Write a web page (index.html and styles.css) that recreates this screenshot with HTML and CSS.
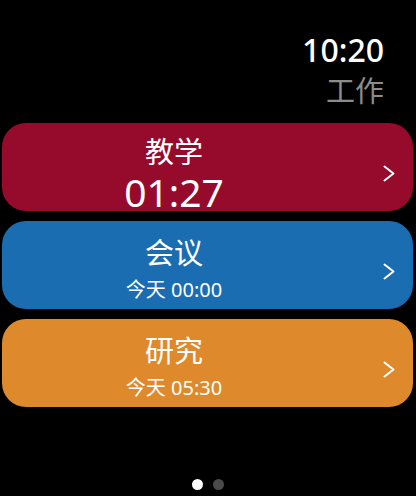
FILE: index.html
```html
<!DOCTYPE html>
<html lang="zh">
<head>
<meta charset="utf-8">
<title>工作</title>
<link rel="stylesheet" href="styles.css">
</head>
<body>
<div class="screen">
  <header class="status">
    <div class="clock">10:20</div>
    <div class="page-title">工作</div>
  </header>

  <main class="list">
    <a class="card card-teach" href="#">
      <div class="card-body card-body-timer">
        <div class="card-title">教学</div>
        <div class="card-timer">01:27</div>
      </div>
      <svg class="chevron" viewBox="0 0 12 17" aria-hidden="true"><polyline points="1.5,1.5 10.5,8.5 1.5,15.5"/></svg>
    </a>
    <a class="card card-meet" href="#">
      <div class="card-body">
        <div class="card-title">会议</div>
        <div class="card-sub">今天 00:00</div>
      </div>
      <svg class="chevron" viewBox="0 0 12 17" aria-hidden="true"><polyline points="1.5,1.5 10.5,8.5 1.5,15.5"/></svg>
    </a>
    <a class="card card-study" href="#">
      <div class="card-body">
        <div class="card-title">研究</div>
        <div class="card-sub">今天 05:30</div>
      </div>
      <svg class="chevron" viewBox="0 0 12 17" aria-hidden="true"><polyline points="1.5,1.5 10.5,8.5 1.5,15.5"/></svg>
    </a>
  </main>

  <nav class="pager">
    <span class="dot dot-active"></span>
    <span class="dot"></span>
  </nav>
</div>
</body>
</html>
```

FILE: styles.css
```css
html, body {
  margin: 0;
  padding: 0;
  background: #000;
}

body {
  font-family: "Noto Sans", "Noto Sans CJK SC", sans-serif;
  color: #fff;
}

.screen {
  width: 416px;
  height: 496px;
  display: flex;
  flex-direction: column;
  overflow: hidden;
}

/* Top-right status: clock and screen title */
.status {
  display: flex;
  flex-direction: column;
  align-items: flex-end;
  padding: 32px 32px 0 0;
}

.clock {
  font-size: 32px;
  line-height: 36px;
  font-weight: 500;
}

.page-title {
  font-family: "Noto Sans CJK SC", sans-serif;
  font-size: 29px;
  line-height: 36px;
  color: #8c8c8c;
  margin-top: 3px;
}

/* Category cards */
.list {
  display: flex;
  flex-direction: column;
  gap: 10px;
  padding: 16px 3px 0 2px;
}

.card {
  display: flex;
  align-items: flex-start;
  height: 88px;
  border-radius: 24px;
  color: #fff;
  text-decoration: none;
}

.card-teach { background: #960a2b; }
.card-meet  { background: #1a6db1; }
.card-study { background: #de8a2c; }

.card-body {
  flex: 1;
  display: flex;
  flex-direction: column;
  align-items: center;
  padding: 13px 37px 0 0;
}

.card-body-timer {
  padding-top: 10px;
}

.card-title {
  font-family: "Noto Sans CJK SC", sans-serif;
  font-size: 29px;
  line-height: 34px;
}

.card-timer {
  font-size: 39px;
  line-height: 40px;
  margin-top: 5px;
}

.card-sub {
  font-family: "Noto Sans", "Noto Sans CJK SC", sans-serif;
  font-size: 20px;
  line-height: 24px;
  margin-top: 10px;
}

.chevron {
  align-self: center;
  width: 12px;
  height: 17px;
  margin: 12px 18px 0 0;
  fill: none;
  stroke: #fff;
  stroke-width: 2;
  stroke-linecap: round;
  stroke-linejoin: round;
}

/* Page indicator */
.pager {
  margin-top: auto;
  display: flex;
  justify-content: center;
  gap: 10px;
  padding-bottom: 6px;
}

.dot {
  width: 11px;
  height: 11px;
  border-radius: 50%;
  background: #4a4a4a;
}

.dot-active {
  background: #fff;
}
```
